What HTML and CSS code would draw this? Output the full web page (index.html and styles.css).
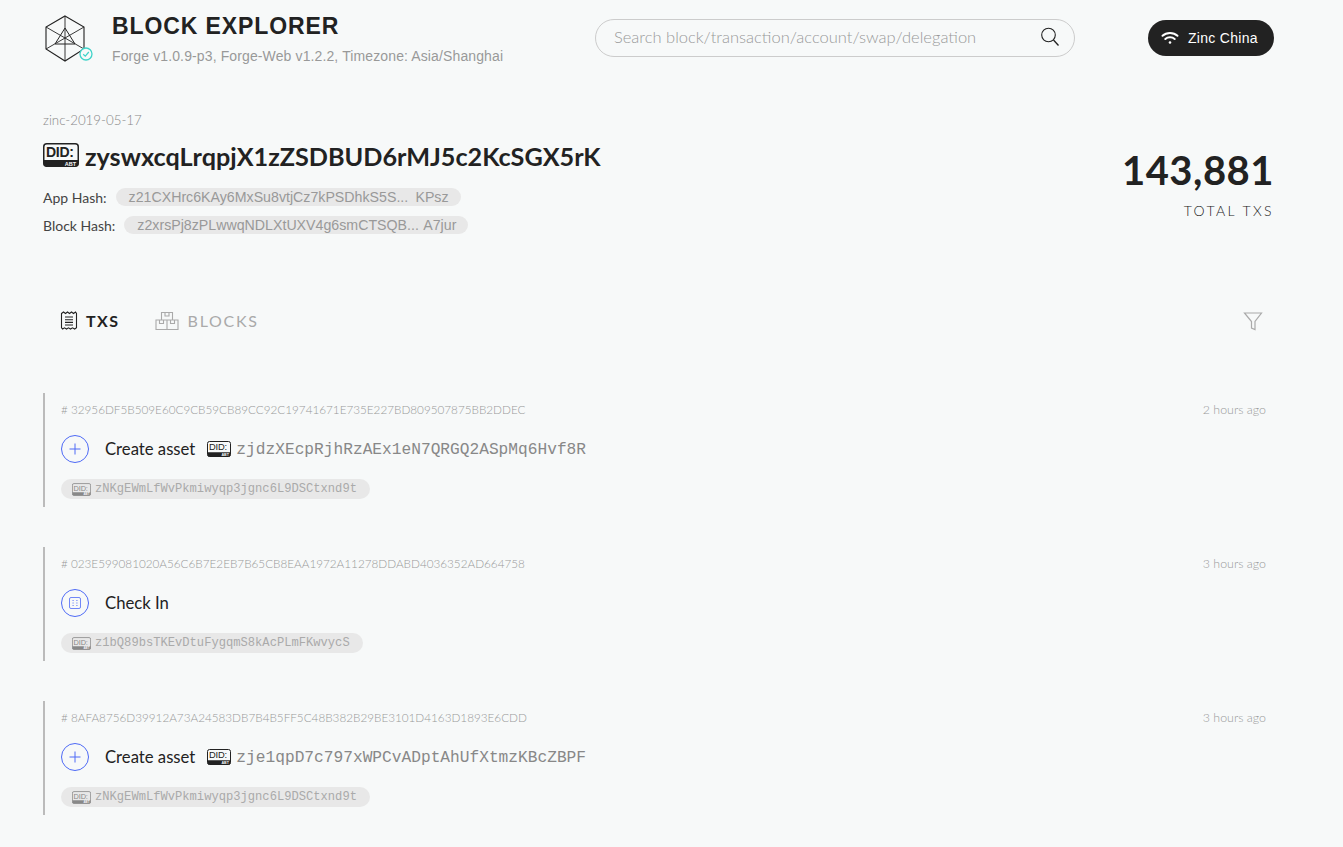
FILE: index.html
```html
<!DOCTYPE html>
<html lang="en">
<head>
<meta charset="utf-8">
<title>Block Explorer</title>
<link rel="stylesheet" href="styles.css">
</head>
<body>
<div class="page">
  <header class="header">
    <div class="brand">
      <svg class="logo" viewBox="0 0 50 48" fill="none" stroke="#222" stroke-width="1">
        <path d="M22 2 41 13V35L22 47 3 35V13Z" stroke-width="1.100"/>
        <path d="M3 13 41 35M41 13 3 35M22 2V47" stroke-width=".9"/>
        <path d="M22 14 32 30H12Z" stroke-width="1"/>
        <circle cx="43" cy="40" r="6" fill="#f7f9f9" stroke="#3fd3c9" stroke-width="1.300"/>
        <path d="M40.200 40.200 42.300 42.200 45.800 38" stroke="#3fd3c9" stroke-width="1.200"/>
      </svg>
      <div class="brand-text">
        <h1 class="brand-title">BLOCK EXPLORER</h1>
        <div class="brand-sub">Forge v1.0.9-p3, Forge-Web v1.2.2, Timezone: Asia/Shanghai</div>
      </div>
    </div>
    <div class="search">
      <span class="search-text">Search block/transaction/account/swap/delegation</span>
      <svg class="search-icon" viewBox="0 0 20 20" fill="none" stroke="#222" stroke-width="1.100"><circle cx="8.500" cy="8" r="6.800"/><path d="M13.500 13 18.500 18.500" stroke-width="1.300"/></svg>
    </div>
    <div class="network">
      <svg class="wifi" viewBox="0 0 18 14" fill="none" stroke="#fff" stroke-width="2" stroke-linecap="round"><path d="M1.500 4.800C5.500 1 12.500 1 16.500 4.800"/><path d="M4.300 8C6.800 5.700 11.200 5.700 13.700 8"/><circle cx="9" cy="11.500" r="1.300" fill="#fff" stroke="none"/></svg>
      <span>Zinc China</span>
    </div>
  </header>

  <section class="summary">
    <div class="summary-main">
      <div class="chain">zinc-2019-05-17</div>
      <div class="block-id">
        <svg class="did did-lg" viewBox="0 0 36 24"><rect x="0.750" y="0.750" width="34.500" height="22.500" rx="3" fill="none" stroke="currentColor" stroke-width="1.500"/><path d="M0.750 17h34.500v3.500a3 3 0 0 1-3 3h-28.500a3 3 0 0 1-3-3z" fill="currentColor"/><text x="3" y="14" class="did-word">DID:</text><text x="33" y="22.500" text-anchor="end" class="did-abt">ABT</text></svg>
        <span>zyswxcqLrqpjX1zZSDBUD6rMJ5c2KcSGX5rK</span>
      </div>
      <div class="hash-row">
        <span class="hash-label">App Hash:</span>
        <span class="hash-pill hash-app"><span>z21CXHrc6KAy6MxSu8vtjCz7kPSDhkS5S...</span><span>KPsz</span></span>
      </div>
      <div class="hash-row">
        <span class="hash-label">Block Hash:</span>
        <span class="hash-pill hash-block"><span>z2xrsPj8zPLwwqNDLXtUXV4g6smCTSQB...</span><span>A7jur</span></span>
      </div>
    </div>
    <div class="total">
      <div class="total-num">143,881</div>
      <div class="total-label">TOTAL TXS</div>
    </div>
  </section>

  <nav class="tabs">
    <div class="tab tab-active">
      <svg class="tab-icon" viewBox="0 0 18 19" fill="none" stroke="currentColor" stroke-width="1.100"><path d="M1.500 2.500 3.500 1 5.500 2.500 7.500 1 9.500 2.500 11.500 1 13.500 2.500 15.500 1 16.500 2.500V16.800L14.700 18 12.500 16.800 10.500 18 8.500 16.800 6.500 18 4.500 16.800 2.700 18 1.500 16.800Z"/><path d="M5 6h8M5 8.700h8M5 11.400h8M5 14h8"/></svg>
      <span>TXS</span>
    </div>
    <div class="tab">
      <svg class="tab-icon tab-icon-wide" viewBox="0 0 24 19" fill="none" stroke="currentColor" stroke-width="1.100"><path d="M6.500 9V1.500H17.500V9M1 18.500V9H12V18.500ZM12 9H23V18.500H12"/><path d="M10 1.500V5H14V1.500M4.500 9V12.500H8.500V9M15.500 9V12.500H19.500V9"/></svg>
      <span>BLOCKS</span>
    </div>
    <svg class="filter" viewBox="0 0 20 20" fill="none" stroke="#aaa" stroke-width="1.200"><path d="M1.500 2H18.500L12 10.500V18.500L8.500 17V10.500Z"/></svg>
  </nav>

  <main class="list">
    <article class="tx">
      <div class="tx-top"><span class="tx-hash"># 32956DF5B509E60C9CB59CB89CC92C19741671E735E227BD809507875BB2DDEC</span><span>2 hours ago</span></div>
      <div class="tx-main">
        <span class="tx-icon"><svg viewBox="0 0 12 12" fill="none" stroke="currentColor" stroke-width="1"><path d="M6 0.500V11.500M0.500 6H11.500"/></svg></span>
        <span class="tx-type">Create asset</span>
        <svg class="did did-sm" viewBox="0 0 36 24"><rect x="0.750" y="0.750" width="34.500" height="22.500" rx="3" fill="none" stroke="currentColor" stroke-width="1.500"/><path d="M0.750 17h34.500v3.500a3 3 0 0 1-3 3h-28.500a3 3 0 0 1-3-3z" fill="currentColor"/><text x="3" y="14" class="did-word">DID:</text><text x="33" y="22.500" text-anchor="end" class="did-abt">ABT</text></svg>
        <span class="tx-addr">zjdzXEcpRjhRzAEx1eN7QRGQ2ASpMq6Hvf8R</span>
      </div>
      <div class="tx-owner"><svg class="did did-xs" viewBox="0 0 36 24"><rect x="0.750" y="0.750" width="34.500" height="22.500" rx="3" fill="none" stroke="currentColor" stroke-width="1.500"/><path d="M0.750 17h34.500v3.500a3 3 0 0 1-3 3h-28.500a3 3 0 0 1-3-3z" fill="currentColor"/><text x="3" y="14" class="did-word">DID:</text><text x="33" y="22.500" text-anchor="end" class="did-abt">ABT</text></svg><span>zNKgEWmLfWvPkmiwyqp3jgnc6L9DSCtxnd9t</span></div>
    </article>

    <article class="tx">
      <div class="tx-top"><span class="tx-hash"># 023E599081020A56C6B7E2EB7B65CB8EAA1972A11278DDABD4036352AD664758</span><span>3 hours ago</span></div>
      <div class="tx-main">
        <span class="tx-icon"><svg viewBox="0 0 12 12" fill="none" stroke="currentColor" stroke-width=".8"><rect x="0.500" y="0.500" width="11" height="11" rx="1.500"/><path d="M3.500 3.500h1.200M7.300 3.500h1.200M3.500 6h1.200M7.300 6h1.200M3.500 8.500h1.200M7.300 8.500h1.200"/></svg></span>
        <span class="tx-type">Check In</span>
      </div>
      <div class="tx-owner"><svg class="did did-xs" viewBox="0 0 36 24"><rect x="0.750" y="0.750" width="34.500" height="22.500" rx="3" fill="none" stroke="currentColor" stroke-width="1.500"/><path d="M0.750 17h34.500v3.500a3 3 0 0 1-3 3h-28.500a3 3 0 0 1-3-3z" fill="currentColor"/><text x="3" y="14" class="did-word">DID:</text><text x="33" y="22.500" text-anchor="end" class="did-abt">ABT</text></svg><span>z1bQ89bsTKEvDtuFygqmS8kAcPLmFKwvycS</span></div>
    </article>

    <article class="tx">
      <div class="tx-top"><span class="tx-hash"># 8AFA8756D39912A73A24583DB7B4B5FF5C48B382B29BE3101D4163D1893E6CDD</span><span>3 hours ago</span></div>
      <div class="tx-main">
        <span class="tx-icon"><svg viewBox="0 0 12 12" fill="none" stroke="currentColor" stroke-width="1"><path d="M6 0.500V11.500M0.500 6H11.500"/></svg></span>
        <span class="tx-type">Create asset</span>
        <svg class="did did-sm" viewBox="0 0 36 24"><rect x="0.750" y="0.750" width="34.500" height="22.500" rx="3" fill="none" stroke="currentColor" stroke-width="1.500"/><path d="M0.750 17h34.500v3.500a3 3 0 0 1-3 3h-28.500a3 3 0 0 1-3-3z" fill="currentColor"/><text x="3" y="14" class="did-word">DID:</text><text x="33" y="22.500" text-anchor="end" class="did-abt">ABT</text></svg>
        <span class="tx-addr">zje1qpD7c797xWPCvADptAhUfXtmzKBcZBPF</span>
      </div>
      <div class="tx-owner"><svg class="did did-xs" viewBox="0 0 36 24"><rect x="0.750" y="0.750" width="34.500" height="22.500" rx="3" fill="none" stroke="currentColor" stroke-width="1.500"/><path d="M0.750 17h34.500v3.500a3 3 0 0 1-3 3h-28.500a3 3 0 0 1-3-3z" fill="currentColor"/><text x="3" y="14" class="did-word">DID:</text><text x="33" y="22.500" text-anchor="end" class="did-abt">ABT</text></svg><span>zNKgEWmLfWvPkmiwyqp3jgnc6L9DSCtxnd9t</span></div>
    </article>
  </main>
</div>
</body>
</html>
```

FILE: styles.css
```css
* { box-sizing: border-box; }
html, body { margin: 0; padding: 0; height: 100%; }
body {
  background: #f7f9f9;
  color: #222;
  font-family: Lato, "Liberation Sans", sans-serif;
  overflow: hidden;
}
.page { padding: 0 69px 0 43px; }

.did { flex: none; }
.did-word { font-family: "Liberation Sans", sans-serif; font-size: 14px; letter-spacing: -.3px; fill: currentColor; }
.did-abt { font-family: "Liberation Sans", sans-serif; font-size: 5.500px; font-weight: 700; fill: #f7f9f9; }

.header { display: flex; align-items: center; height: 76px; }
.brand { display: flex; align-items: center; width: 552px; }
.logo { width: 50px; height: 48px; margin-right: 19px; flex: none; }
.brand-text { padding-top: 2px; }
.brand-title {
  margin: 0;
  font: 700 23px/26px "Liberation Sans", sans-serif;
  letter-spacing: .9px;
  color: #222;
}
.brand-sub { margin-top: 8px; font: 14px/18px "Liberation Sans", sans-serif; letter-spacing: .12px; color: #999; }
.search {
  display: flex; align-items: center; justify-content: space-between;
  width: 480px; height: 38px;
  border: 1px solid #ccc; border-radius: 19px;
  padding: 0 14px 0 18px;
}
.search-text { font-size: 16.500px; line-height: 20px; margin-top: -3px; font-weight: 300; color: #999; }
.search-icon { width: 20px; height: 20px; margin-top: -2px; }
.network {
  margin-left: auto;
  display: flex; align-items: center; gap: 9px;
  width: 126px; height: 36px; padding-left: 13px;
  border-radius: 18px;
  background: #222; color: #fff;
  font: 14px "Liberation Sans", sans-serif;
  letter-spacing: .3px;
}
.wifi { width: 18px; height: 14px; }

.summary { display: flex; justify-content: space-between; margin-top: 34px; height: 132px; }
.chain { font-size: 13.300px; line-height: 20px; font-weight: 300; color: #888; }
.block-id { display: flex; align-items: center; gap: 6px; margin-top: 11px; font-size: 25.200px; line-height: 30px; font-weight: 700; color: #222; }
.did-lg { width: 36px; height: 24px; color: #222; margin-top: -3px; }
.hash-row { display: flex; align-items: center; gap: 8px; height: 20px; font-size: 14px; margin-top: 8px; color: #444; }
.block-id + .hash-row { margin-top: 16px; }
.hash-label { margin-right: 1px; }
.hash-pill {
  display: flex; justify-content: space-between; align-items: center;
  height: 18px; border-radius: 9px; padding: 0 12px 0 13px;
  background: #e8e8e8; color: #999;
  font: 14.200px "Liberation Sans", sans-serif;
}
.hash-app { width: 345px; }
.hash-block { width: 344px; }
.total { text-align: right; padding-top: 37px; }
.total-num { font-size: 40px; line-height: 46px; font-weight: 700; letter-spacing: .5px; color: #222; }
.total-label { margin-top: 8px; font-size: 14px; line-height: 20px; font-weight: 300; letter-spacing: 2.400px; color: #222; }

.tabs { display: flex; align-items: center; height: 30px; margin-top: 63px; padding: 0 11px 0 17px; }
.tab { display: flex; align-items: center; gap: 9px; margin-right: 35px; font-size: 16px; letter-spacing: 1.700px; color: #aaa; font-weight: 400; }
.tab-active { gap: 8px; color: #222; font-weight: 700; letter-spacing: 1.500px; }
.tab-icon { width: 18px; height: 19px; }
.tab-icon-wide { width: 24px; }
.filter { width: 20px; height: 20px; margin-left: auto; margin-top: 2px; }

.list { margin-top: 58px; }
.tx { height: 114px; margin-bottom: 40px; padding-left: 16px; border-left: 2px solid #bbb; margin-right: 8px; }
.tx-top {
  display: flex; justify-content: space-between; align-items: center;
  height: 32px; font-size: 12.400px; font-weight: 300; color: #999;
}
.tx-hash { font-size: 11.720px; }
.tx-main { display: flex; align-items: center; height: 28px; margin-top: 10px; }
.tx-icon {
  display: flex; align-items: center; justify-content: center;
  width: 28px; height: 28px; border: 1px solid #4e6af6; border-radius: 50%;
  color: #4e6af6; margin-right: 16px; flex: none;
}
.tx-icon svg { width: 12px; height: 12px; }
.tx-type { font-size: 16.700px; line-height: 24px; color: #222; margin-right: 12px; }
.did-sm { width: 24px; height: 16px; color: #222; margin-right: 5px; }
.tx-addr { font: 16.200px "Liberation Mono", monospace; margin-top: 2px; color: #888; }
.tx-owner {
  display: inline-flex; align-items: center; gap: 4px;
  height: 20px; margin-top: 16px; padding: 0 13px 0 11px;
  border-radius: 10px; background: #e8e8e8;
  font: 12.130px "Liberation Mono", monospace; color: #aaa;
}
.did-xs { width: 19px; height: 13px; color: #888; }
```
